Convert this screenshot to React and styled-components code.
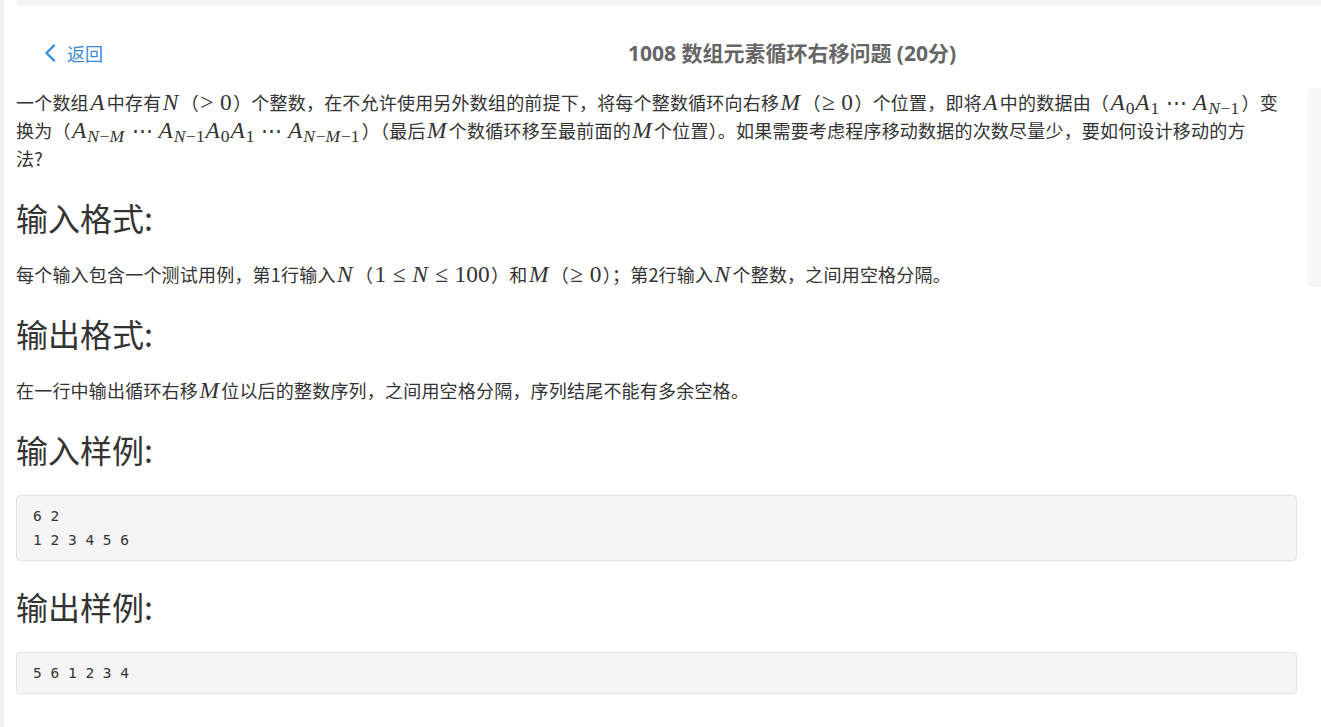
import styled, { createGlobalStyle } from "styled-components";

const GlobalStyle = createGlobalStyle`
  html, body {
    margin: 0;
    padding: 0;
    background: #fff;
  }
  body {
    font-family: "Noto Sans CJK SC", "Open Sans", sans-serif;
    color: #333;
    overflow: hidden;
  }
`;

const Page = styled.div`
  display: flex;
  min-height: 727px;
`;

const Stripe = styled.div`
  width: 4px;
  flex-shrink: 0;
  background: #eef2f6;
`;

const Main = styled.div`
  flex: 1;
  display: flex;
  flex-direction: column;
  min-width: 0;
`;

const TopCard = styled.div`
  height: 5px;
  margin-left: 12px;
  background: #f4f4f4;
  border-bottom-left-radius: 6px;
  box-shadow: 0 1px 2px rgba(0, 0, 0, 0.05);
`;

const Body = styled.div`
  display: flex;
  align-items: flex-start;
  gap: 10px;
  padding-left: 12px;
`;

const Content = styled.div`
  width: 1281px;
  flex-shrink: 0;
`;

const Header = styled.div`
  height: 83px;
  display: flex;
  align-items: flex-start;
  padding-top: 34px;
  box-sizing: border-box;
`;

const BackLink = styled.a`
  display: flex;
  align-items: center;
  gap: 11px;
  margin-left: 28px;
  height: 28px;
  color: #3b8ad9;
  font-size: 18px;
  cursor: pointer;
  text-decoration: none;
`;

const Title = styled.h1`
  flex: 1;
  margin: 0;
  padding-left: 184px;
  text-align: center;
  font-size: 21px;
  line-height: 28px;
  font-weight: 700;
  color: #666;
  font-family: "Open Sans", "Noto Sans CJK SC", sans-serif;
`;

const Paragraph = styled.p`
  margin: 0 8px 0 0;
  font-size: 18px;
  line-height: 28px;
  letter-spacing: 0.2px;
  color: #333;
`;

const Heading = styled.h2`
  margin: ${(p) => (p.$sample ? "28px 0 28px" : "28px 0 25px")};
  font-size: 32px;
  line-height: 35px;
  font-weight: 400;
  color: #333;
`;

const Pre = styled.pre`
  margin: 0;
  padding: 8px 16px;
  background: #f5f5f5;
  border: 1px solid #e3e3e3;
  border-radius: 4px;
  font-family: "DejaVu Sans Mono", "Liberation Mono", monospace;
  font-size: 14.5px;
  line-height: 24px;
  color: #333;
`;

const Sidebar = styled.div`
  flex: 1;
  margin-top: 83px;
  height: 199px;
  background: #f7f7f7;
  border-radius: 4px 0 0 4px;
`;

const FooterStrip = styled.div`
  margin-top: 33px;
  margin-left: 12px;
  flex: 1;
  background: #f5f5f5;
`;

const Math = styled.span`
  font-family: "Liberation Serif", "DejaVu Serif", serif;
  font-size: 1.3em;
  line-height: 1;
  letter-spacing: 0;
  white-space: nowrap;
  margin: 0 0.06em;
`;

const V = styled.span`
  font-style: italic;
  margin-right: 0.04em;
`;

const Sub = styled.sub`
  font-size: 0.75em;
  vertical-align: -0.25em;
  line-height: 0;
  margin-right: 0.05em;
`;

const Dots = styled.span`
  margin: 0 0.28em;
  font-size: 0.9em;
`;

const Rel = styled.span`
  margin: 0 0.28em 0 ${(p) => (p.$lead ? "0" : "0.28em")};
`;

const A = ({ children }) => (
  <>
    <V>A</V>
    {children && <Sub>{children}</Sub>}
  </>
);

const ChevronLeft = () => (
  <svg width="12" height="18" viewBox="0 0 12 18" fill="none">
    <polyline
      points="10,1.5 2.5,9 10,16.5"
      stroke="#3b8ad9"
      strokeWidth="2.4"
      strokeLinecap="round"
      strokeLinejoin="round"
    />
  </svg>
);

export default function App() {
  return (
    <Page>
      <GlobalStyle />
      <Stripe />
      <Main>
        <TopCard />
        <Body>
          <Content>
            <Header>
              <BackLink>
                <ChevronLeft />
                返回
              </BackLink>
              <Title>1008 数组元素循环右移问题 (20分)</Title>
            </Header>

            <Paragraph>
              一个数组<Math><V>A</V></Math>中存有<Math><V>N</V></Math>（<Math><Rel $lead>&gt;</Rel>0</Math>）个整数，在不允许使用另外数组的前提下，将每个整数循环向右移<Math><V>M</V></Math>（<Math><Rel $lead>≥</Rel>0</Math>）个位置，即将<Math><V>A</V></Math>中的数据由（<Math><A>0</A><A>1</A><Dots>⋯</Dots><A><V>N</V>−1</A></Math>）变换为（<Math><A><V>N</V>−<V>M</V></A><Dots>⋯</Dots><A><V>N</V>−1</A><A>0</A><A>1</A><Dots>⋯</Dots><A><V>N</V>−<V>M</V>−1</A></Math>）（最后<Math><V>M</V></Math>个数循环移至最前面的<Math><V>M</V></Math>个位置）。如果需要考虑程序移动数据的次数尽量少，要如何设计移动的方<br />法?
            </Paragraph>

            <Heading>输入格式:</Heading>
            <Paragraph>
              每个输入包含一个测试用例，第1行输入<Math><V>N</V></Math>（<Math>1<Rel>≤</Rel><V>N</V><Rel>≤</Rel>100</Math>）和<Math><V>M</V></Math>（<Math><Rel $lead>≥</Rel>0</Math>）；第2行输入<Math><V>N</V></Math>个整数，之间用空格分隔。
            </Paragraph>

            <Heading>输出格式:</Heading>
            <Paragraph>
              在一行中输出循环右移<Math><V>M</V></Math>位以后的整数序列，之间用空格分隔，序列结尾不能有多余空格。
            </Paragraph>

            <Heading $sample>输入样例:</Heading>
            <Pre>{"6 2\n1 2 3 4 5 6"}</Pre>

            <Heading $sample>输出样例:</Heading>
            <Pre>5 6 1 2 3 4</Pre>
          </Content>
          <Sidebar />
        </Body>
        <FooterStrip />
      </Main>
    </Page>
  );
}
